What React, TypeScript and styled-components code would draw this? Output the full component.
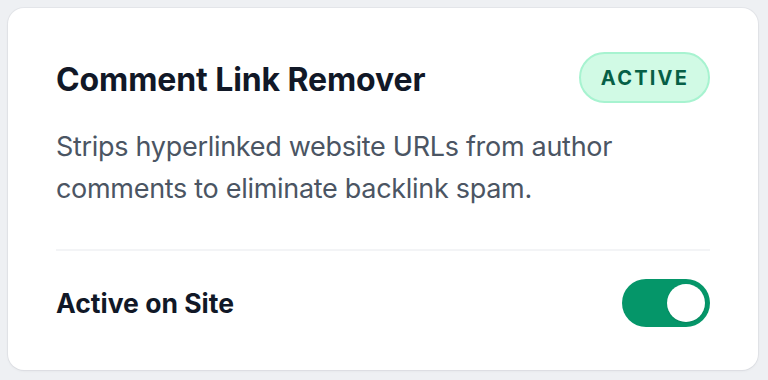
import React, { useState } from "react";
import styled, { createGlobalStyle } from "styled-components";

const GlobalStyle = createGlobalStyle`
  html, body {
    margin: 0;
    padding: 0;
    background: #eef0f3;
  }
  body {
    font-family: Inter, "Noto Sans", sans-serif;
    -webkit-font-smoothing: antialiased;
  }
  #root {
    padding: 8px;
  }
`;

const Card = styled.section`
  box-sizing: border-box;
  width: 750px;
  background: #ffffff;
  border-radius: 16px;
  box-shadow: 0 0 0 1px rgba(15, 23, 42, 0.04), 0 1px 3px rgba(15, 23, 42, 0.06);
  padding: 44px 48px 43px 48px;
  display: flex;
  flex-direction: column;
`;

const Header = styled.div`
  display: flex;
  justify-content: space-between;
  align-items: flex-start;
  margin-bottom: 23px;
`;

const Title = styled.h2`
  margin: 8px 0 0 0;
  font-size: 32px;
  line-height: 40px;
  font-weight: 700;
  color: #111827;
  letter-spacing: -0.1px;
`;

const Badge = styled.span`
  box-sizing: border-box;
  height: 51px;
  padding: 0 19px 0 20px;
  display: inline-flex;
  align-items: center;
  border-radius: 999px;
  background: #d1fae5;
  border: 2px solid #a7f3d0;
  color: #065f46;
  font-size: 20px;
  font-weight: 700;
  letter-spacing: 2.2px;
  text-transform: uppercase;
`;

const Description = styled.p`
  margin: 0 0 39px 0;
  font-size: 27px;
  line-height: 42px;
  letter-spacing: -0.3px;
  color: #4b5563;
  max-width: 600px;
`;

const Divider = styled.hr`
  margin: 0 0 28px 0;
  border: none;
  height: 2px;
  background: #f3f4f6;
`;

const Row = styled.div`
  display: flex;
  justify-content: space-between;
  align-items: center;
`;

const Label = styled.span`
  font-size: 26.5px;
  font-weight: 700;
  letter-spacing: 0;
  color: #111827;
`;

const Switch = styled.button<{ $on: boolean }>`
  box-sizing: border-box;
  width: 88px;
  height: 48px;
  padding: 5px;
  border: none;
  border-radius: 999px;
  background: ${(p) => (p.$on ? "#059669" : "#d1d5db")};
  display: flex;
  justify-content: ${(p) => (p.$on ? "flex-end" : "flex-start")};
  align-items: center;
  cursor: pointer;
`;

const Knob = styled.span`
  width: 38px;
  height: 38px;
  border-radius: 50%;
  background: #ffffff;
  box-shadow: 0 1px 2px rgba(0, 0, 0, 0.12);
`;

export default function App() {
  const [on, setOn] = useState(true);
  return (
    <>
      <GlobalStyle />
      <Card>
        <Header>
          <Title>Comment Link Remover</Title>
          <Badge>Active</Badge>
        </Header>
        <Description>
          Strips hyperlinked website URLs from author comments to eliminate backlink spam.
        </Description>
        <Divider />
        <Row>
          <Label>Active on Site</Label>
          <Switch $on={on} onClick={() => setOn(!on)} aria-pressed={on}>
            <Knob />
          </Switch>
        </Row>
      </Card>
    </>
  );
}
